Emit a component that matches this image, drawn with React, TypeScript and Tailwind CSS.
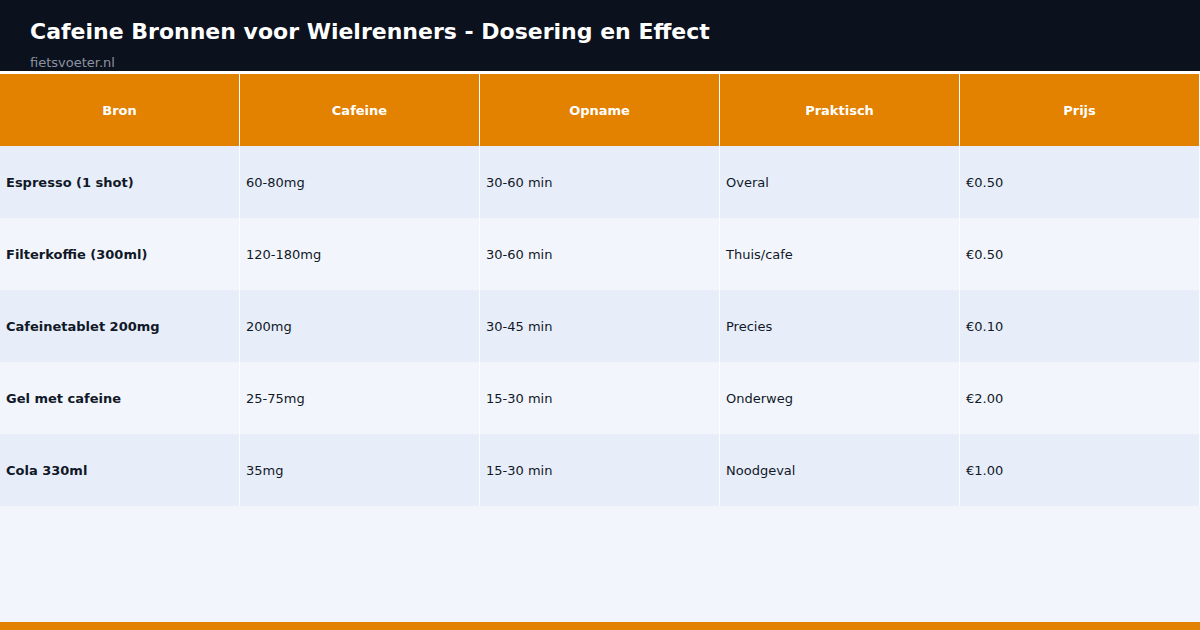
import React from 'react';

type Row = {
  bron: string;
  cafeine: string;
  opname: string;
  praktisch: string;
  prijs: string;
};

const rows: Row[] = [
  { bron: 'Espresso (1 shot)', cafeine: '60-80mg', opname: '30-60 min', praktisch: 'Overal', prijs: '€0.50' },
  { bron: 'Filterkoffie (300ml)', cafeine: '120-180mg', opname: '30-60 min', praktisch: 'Thuis/cafe', prijs: '€0.50' },
  { bron: 'Cafeinetablet 200mg', cafeine: '200mg', opname: '30-45 min', praktisch: 'Precies', prijs: '€0.10' },
  { bron: 'Gel met cafeine', cafeine: '25-75mg', opname: '15-30 min', praktisch: 'Onderweg', prijs: '€2.00' },
  { bron: 'Cola 330ml', cafeine: '35mg', opname: '15-30 min', praktisch: 'Noodgeval', prijs: '€1.00' },
];

const columns = ['Bron', 'Cafeine', 'Opname', 'Praktisch', 'Prijs'];

const App: React.FC = () => {
  return (
    <div className="w-[1200px] h-[630px] flex flex-col bg-[#f2f6fc] font-['DejaVu_Sans',sans-serif] text-[#111827] overflow-hidden">
      {/* title bar */}
      <header className="h-[74px] shrink-0 bg-[#0b111d] border-b-[3px] border-white px-[30px] pt-[19px]">
        <h1 className="text-[22px] leading-[26px] font-bold text-white">
          Cafeine Bronnen voor Wielrenners - Dosering en Effect
        </h1>
        <p className="mt-[10px] text-[13px] leading-[16px] text-[#8b93a0]">fietsvoeter.nl</p>
      </header>

      {/* table */}
      <div className="grid grid-cols-5 h-[72px] shrink-0 bg-[#e38100]">
        {columns.map((col) => (
          <div
            key={col}
            className="flex items-center justify-center pt-[2px] border-r border-white text-[13px] font-bold text-white"
          >
            {col}
          </div>
        ))}
      </div>

      {rows.map((row, i) => (
        <div
          key={row.bron}
          className={`grid grid-cols-5 h-[72px] shrink-0 text-[13px] ${i % 2 === 0 ? 'bg-[#e7eefa]' : 'bg-[#f2f6fc]'}`}
        >
          <div className="flex items-center px-[6px] pt-[2px] border-r border-white/80 font-bold">{row.bron}</div>
          <div className="flex items-center px-[6px] pt-[2px] border-r border-white/80">{row.cafeine}</div>
          <div className="flex items-center px-[6px] pt-[2px] border-r border-white/80">{row.opname}</div>
          <div className="flex items-center px-[6px] pt-[2px] border-r border-white/80">{row.praktisch}</div>
          <div className="flex items-center px-[6px] pt-[2px] border-r border-white/80">{row.prijs}</div>
        </div>
      ))}

      <div className="flex-1" />
      <div className="h-[8px] shrink-0 bg-[#e38100]" />
    </div>
  );
};

export default App;
